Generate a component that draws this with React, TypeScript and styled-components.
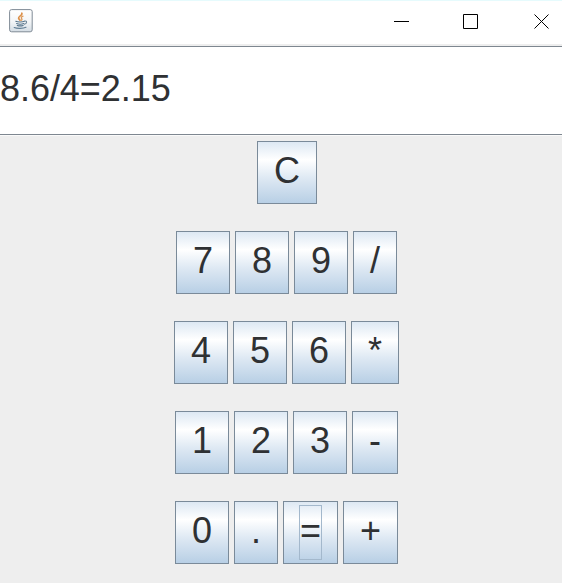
import React from "react";
import styled, { createGlobalStyle } from "styled-components";

const GlobalStyle = createGlobalStyle`
  * { box-sizing: border-box; }
  body { margin: 0; background: #eeeeee; overflow: hidden; }
`;

const Window = styled.div`
  width: 562px;
  height: 583px;
  overflow: hidden;
  background: #eeeeee;
  color: #2f3133;
  font: 36px/42px "Liberation Sans", Arial, sans-serif;
`;

const TitleBar = styled.header`
  display: flex;
  justify-content: space-between;
  height: 46px;
  padding: 9px 12px 0 9px;
  background: #ffffff;
  border-top: 1px solid #e6fbfd;
  border-bottom: 2px solid #eeeeee;
`;

const AppIcon = styled.svg`
  display: block;
  width: 24px;
  height: 24px;
  margin-top: -1px;
`;

const WindowControls = styled.div`
  display: grid;
  grid-template-columns: 69px 71px 16px;
  padding-top: 4px;
`;

const ControlIcon = styled.svg`
  display: block;
  width: 16px;
  height: 16px;
  fill: none;
  stroke: #000000;
  stroke-width: 1;
`;

const Display = styled.output`
  display: block;
  height: 89px;
  padding-top: 21px;
  background: #ffffff;
  border-top: 1px solid #7e8790;
  border-bottom: 1px solid #7e8790;
  letter-spacing: -0.05px;
  white-space: pre;
`;

const Keypad = styled.main`
  display: flex;
  flex-direction: column;
  gap: 27px;
  width: 573px;
  padding-top: 5px;
  border-top: 1px solid #fafafa;
`;

const KeyRow = styled.div<{ $inset: number }>`
  display: flex;
  gap: 5px;
  padding-left: ${(p) => p.$inset}px;
`;

const Key = styled.button<{ $width: number }>`
  display: flex;
  align-items: flex-start;
  justify-content: center;
  width: ${(p) => p.$width}px;
  height: 63px;
  padding: 3px 0 0;
  border: 1px solid #7a8a99;
  border-radius: 0;
  background: linear-gradient(#dde8f3 0%, #ffffff 29%, #dde8f3 60%, #b8cfe5 100%);
  color: inherit;
  font: inherit;
`;

const KeyLabel = styled.span<{ $focused: boolean }>`
  height: 55px;
  padding: 4px 0 0;
  border: 1px solid ${(p) => (p.$focused ? "#a3b8cc" : "transparent")};
`;

type KeySpec = { label: string; width: number; focused?: boolean };

const rows: { inset: number; keys: KeySpec[] }[] = [
  { inset: 257, keys: [{ label: "C", width: 60 }] },
  {
    inset: 176,
    keys: [
      { label: "7", width: 54 },
      { label: "8", width: 54 },
      { label: "9", width: 54 },
      { label: "/", width: 44 },
    ],
  },
  {
    inset: 174,
    keys: [
      { label: "4", width: 54 },
      { label: "5", width: 54 },
      { label: "6", width: 54 },
      { label: "*", width: 48 },
    ],
  },
  {
    inset: 175,
    keys: [
      { label: "1", width: 54 },
      { label: "2", width: 54 },
      { label: "3", width: 54 },
      { label: "-", width: 46 },
    ],
  },
  {
    inset: 175,
    keys: [
      { label: "0", width: 54 },
      { label: ".", width: 44 },
      { label: "=", width: 55, focused: true },
      { label: "+", width: 55 },
    ],
  },
];

function JavaIcon() {
  return (
    <AppIcon viewBox="0 0 24 24" aria-hidden="true">
      <defs>
        <linearGradient id="tile" x1="0" y1="0" x2="0" y2="1">
          <stop offset="0" stopColor="#ffffff" />
          <stop offset="0.55" stopColor="#f3f5f7" />
          <stop offset="1" stopColor="#d3dce4" />
        </linearGradient>
      </defs>
      <rect x="0.6" y="0.6" width="22.6" height="22.2" rx="2" fill="url(#tile)" stroke="#7f8a95" />
      <g fill="none" strokeLinecap="round">
        <path d="M12.8 4.2c1.2 2.2-3.7 3-3.2 5 .2.9 1.2 1.3 1.4 2.1" stroke="#dc8f48" strokeWidth="1.7" />
        <path d="M14 7.2c-2.4 1-1.8 1.8-1.2 2.6.4.6 0 1.2-.5 1.5" stroke="#dc9a5c" strokeWidth="1.3" />
        <path d="M6.8 12.3c2 .9 6.7.8 8.6 0M7.6 14.6c2 .7 5.4.7 7.2 0M8.3 16.4c1.8.6 4.2.6 5.8 0" stroke="#57758c" strokeWidth="1.1" />
        <path d="M15.7 12.1c2.6-.5 2.5 2.3-.3 3.2" stroke="#6f8799" strokeWidth="1.1" />
        <path d="M5.2 18.5c2.5 1.2 9 1.2 11.8-.2" stroke="#627f95" strokeWidth="1.1" />
      </g>
    </AppIcon>
  );
}

export default function App() {
  return (
    <>
      <GlobalStyle />
      <Window>
        <TitleBar>
          <JavaIcon />
          <WindowControls>
            <ControlIcon viewBox="0 0 16 16" role="img" aria-label="Minimize">
              <path d="M0 7.5h15" />
            </ControlIcon>
            <ControlIcon viewBox="0 0 16 16" role="img" aria-label="Maximize">
              <path d="M.5.5h14v14H.5z" />
            </ControlIcon>
            <ControlIcon viewBox="0 0 16 16" role="img" aria-label="Close">
              <path d="M.5.5l14 14M14.5.5l-14 14" />
            </ControlIcon>
          </WindowControls>
        </TitleBar>
        <Display>8.6/4=2.15</Display>
        <Keypad>
          {rows.map((row) => (
            <KeyRow key={row.keys[0].label} $inset={row.inset}>
              {row.keys.map((k) => (
                <Key key={k.label} type="button" $width={k.width}>
                  <KeyLabel $focused={!!k.focused}>{k.label}</KeyLabel>
                </Key>
              ))}
            </KeyRow>
          ))}
        </Keypad>
      </Window>
    </>
  );
}
